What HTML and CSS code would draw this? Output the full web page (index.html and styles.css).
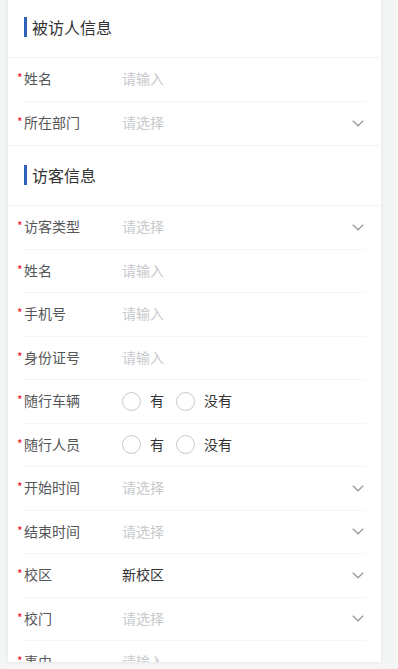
FILE: index.html
```html
<!DOCTYPE html>
<html lang="zh">
<head>
<meta charset="utf-8">
<link rel="stylesheet" href="styles.css">
</head>
<body>
<div class="page">
  <div class="card">
    <div class="scroll">
      <div class="sec-head first"><span class="bar"></span><span class="sec-title">被访人信息</span></div>
      <div class="row"><div class="label"><span class="req">*</span>姓名</div><div class="value ph">请输入</div></div>
      <div class="row last"><div class="label"><span class="req">*</span>所在部门</div><div class="value ph">请选择</div><svg class="chev" viewBox="0 0 12 7"><path d="M0.8 0.8 L6 5.8 L11.2 0.8"/></svg></div>

      <div class="sec-head"><span class="bar"></span><span class="sec-title">访客信息</span></div>
      <div class="row"><div class="label"><span class="req">*</span>访客类型</div><div class="value ph">请选择</div><svg class="chev" viewBox="0 0 12 7"><path d="M0.8 0.8 L6 5.8 L11.2 0.8"/></svg></div>
      <div class="row"><div class="label"><span class="req">*</span>姓名</div><div class="value ph">请输入</div></div>
      <div class="row"><div class="label"><span class="req">*</span>手机号</div><div class="value ph">请输入</div></div>
      <div class="row"><div class="label"><span class="req">*</span>身份证号</div><div class="value ph">请输入</div></div>
      <div class="row"><div class="label"><span class="req">*</span>随行车辆</div><div class="value radios"><span class="radio"><span class="circle"></span>有</span><span class="radio"><span class="circle"></span>没有</span></div></div>
      <div class="row"><div class="label"><span class="req">*</span>随行人员</div><div class="value radios"><span class="radio"><span class="circle"></span>有</span><span class="radio"><span class="circle"></span>没有</span></div></div>
      <div class="row"><div class="label"><span class="req">*</span>开始时间</div><div class="value ph">请选择</div><svg class="chev" viewBox="0 0 12 7"><path d="M0.8 0.8 L6 5.8 L11.2 0.8"/></svg></div>
      <div class="row"><div class="label"><span class="req">*</span>结束时间</div><div class="value ph">请选择</div><svg class="chev" viewBox="0 0 12 7"><path d="M0.8 0.8 L6 5.8 L11.2 0.8"/></svg></div>
      <div class="row"><div class="label"><span class="req">*</span>校区</div><div class="value">新校区</div><svg class="chev" viewBox="0 0 12 7"><path d="M0.8 0.8 L6 5.8 L11.2 0.8"/></svg></div>
      <div class="row"><div class="label"><span class="req">*</span>校门</div><div class="value ph">请选择</div><svg class="chev" viewBox="0 0 12 7"><path d="M0.8 0.8 L6 5.8 L11.2 0.8"/></svg></div>
      <div class="row"><div class="label"><span class="req">*</span>事由</div><div class="value ph">请输入</div></div>
    </div>
  </div>
</div>
</body>
</html>
```
FILE: styles.css
```css
* { box-sizing: border-box; }
html, body { margin: 0; padding: 0; }
body {
  background: #f4f5f5;
  font-family: "Noto Sans CJK SC", "Noto Sans", sans-serif;
  width: 398px;
  height: 669px;
  overflow: hidden;
}
.page {
  padding: 0 0 0 8px;
}
.card {
  width: 373px;
  height: 662px;
  background: #fff;
  overflow: hidden;
  box-shadow: 0 0 5px rgba(0, 0, 0, 0.07);
}
.scroll {
  margin-top: -3px;
}
.sec-head {
  height: 61px;
  display: flex;
  align-items: center;
  padding-left: 16px;
  padding-bottom: 2px;
  border-top: 1px solid #f2f3f4;
  border-bottom: 1px solid #f2f3f4;
}
.bar {
  width: 3px;
  height: 20px;
  background: #2f63b8;
  margin-right: 5px;
  margin-top: 1px;
}
.sec-title {
  font-size: 16px;
  color: #323233;
  line-height: 20px;
}
.row {
  height: 43.5px;
  margin: 0 15px 0 16px;
  display: flex;
  align-items: center;
  padding-bottom: 2px;
  border-bottom: 1px solid #f4f5f6;
}
.row.last { border-bottom: none; }
.label {
  width: 98px;
  flex: none;
  font-size: 14px;
  color: #555658;
  display: flex;
  align-items: center;
}
.req {
  width: 7px;
  margin-left: -7px;
  color: #ee0a24;
  font-size: 12px;
  line-height: 1;
}
.value {
  flex: 1;
  font-size: 14px;
  color: #323233;
}
.value.ph { color: #c8c9cc; }
.chev {
  width: 12px;
  height: 7px;
  margin-right: 2px;
  margin-top: 2px;
  flex: none;
}
.chev path {
  fill: none;
  stroke: #9a9ca2;
  stroke-width: 1.4;
}
.radios {
  display: flex;
  align-items: center;
  color: #323233;
}
.radio {
  display: flex;
  align-items: center;
  margin-right: 12px;
}
.circle {
  width: 19px;
  height: 19px;
  border: 1px solid #c8c9cc;
  border-radius: 50%;
  margin-right: 9px;
  margin-top: 2px;
}
```
